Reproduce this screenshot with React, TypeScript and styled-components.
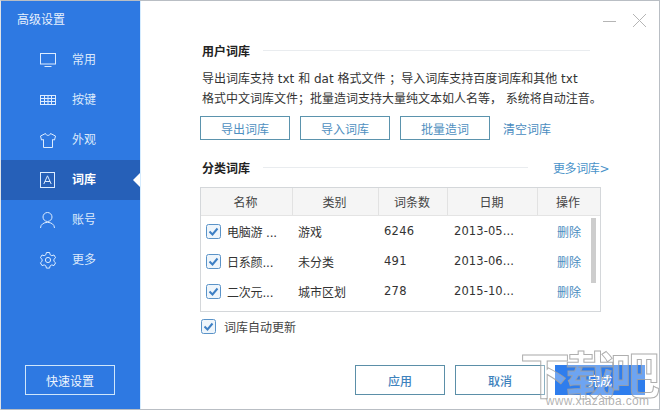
import React from "react";
import styled, { createGlobalStyle } from "styled-components";

const Global = createGlobalStyle`
  html, body { margin: 0; padding: 0; background: #fff; }
  body { font-family: "DejaVu Sans", "Noto Sans CJK SC", sans-serif; font-size: 12px; color: #333; }
  * { box-sizing: border-box; }
`;

const Frame = styled.div`
  position: relative;
  width: 660px; height: 410px; overflow: hidden;
  display: flex; background: #fff;
  border: 1px solid #b9bec4; border-left-color: #dfe3e8;
`;
const Side = styled.aside`
  width: 140px; background: #2e79e2; color: #e8f1fd;
  display: flex; flex-direction: column; flex: none;
  border-right: 1px solid #d5ecff;
`;
const SideTitle = styled.div`
  height: 39px; padding: 11px 0 0 16px; font-size: 12px; line-height: 16px; color: #e6f0fd;
`;
const Menu = styled.nav`display: flex; flex-direction: column;`;
const MenuItem = styled.div<{ $on?: boolean }>`
  position: relative; height: 40px; display: flex; align-items: center;
  padding-left: 38px; gap: 15px;
  font-size: 12px; font-weight: ${p => (p.$on ? 700 : 400)};
  background: ${p => (p.$on ? "#2660b8" : "transparent")};
  color: ${p => (p.$on ? "#fff" : "#dbe9fb")};
  &::after {
    content: ${p => (p.$on ? '""' : "none")};
    position: absolute; right: 0; top: 13px;
    border: 7px solid transparent; border-right-color: #fff; border-left-width: 0;
  }
`;
const MenuLabel = styled.span`padding-bottom: 3px;`;
const MenuIcon = styled.svg`width: 18px; height: 18px; flex: none; fill: none; stroke: #dcecff; stroke-width: 1; margin-bottom: 1px;`;
const Spacer = styled.div`flex: 1;`;
const QuickBtn = styled.div`
  margin: 0 0 14px 24px; width: 90px; height: 30px; border: 1px solid #cfe6fb;
  display: flex; align-items: center; justify-content: center; color: #eef5fe; font-size: 12px;
`;
const Main = styled.main`
  flex: 1; display: flex; flex-direction: column; padding: 0 13px 0 61px; position: relative; min-width: 0;
`;
const WinBar = styled.div`
  height: 39px; display: flex; justify-content: flex-end; align-items: flex-start; gap: 15px; padding: 12px 0 0 0; margin-right: -1px;
`;
const WinIcon = styled.svg`width: 15px; height: 15px; fill: none; stroke: #b5b5b5; stroke-width: 1;`;
const SectionHead = styled.div<{ $short?: boolean }>`
  display: flex; align-items: center; gap: 13px; height: 20px; font-size: 12px; font-weight: 700; color: #222;
  padding-right: ${p => (p.$short ? "0" : "56px")};
`;
const Rule = styled.span<{ $w?: number }>`
  flex: ${p => (p.$w ? "none" : 1)}; width: ${p => (p.$w ? `${p.$w}px` : "auto")}; height: 1px; background: #e9ecef;
`;
const MoreLink = styled.span`color: #4a93c9; font-size: 12px; font-weight: 400; margin-left: 12px; white-space: nowrap; letter-spacing: -0.4px;`;
const Para = styled.p`
  margin: 9px 0 7px; font-size: 12px; line-height: 20px; color: #333; white-space: nowrap;
`;
const BtnRow = styled.div`display: flex; align-items: center; gap: 10px; margin-left: -2px;`;
const OutlineBtn = styled.div`
  width: 90px; height: 24px; border: 1px solid #5b93ad; display: flex; align-items: center; justify-content: center;
  color: #4f8fc0; font-size: 12px; background: #fff;
`;
const ClearLink = styled.span`color: #4a8cc0; font-size: 12px; margin-left: 3px;`;
const Gap = styled.div`height: 17px;`;
const Table = styled.div`
  margin: 10px 0 0 -2px; width: 401px; height: 125px; border: 1px solid #d4d7da; position: relative; overflow: hidden;
`;
const Grid = `display: grid; grid-template-columns: 92px 86px 69px 90px 62px;`;
const HeadRow = styled.div`
  ${Grid} height: 28px; background: #f5f5f5; border-bottom: 1px solid #e4e4e4;
`;
const HeadCell = styled.div`
  display: flex; align-items: center; justify-content: center; font-size: 12px; color: #444;
  border-right: 1px solid #e2e2e2; padding-right: 2px;
  &:last-child { border-right: none; }
`;
const Row = styled.div`
  ${Grid} height: 30px; align-items: center; font-size: 12px; color: #333;
`;
const NameCell = styled.div`display: flex; align-items: center; gap: 6px; padding-left: 5px; white-space: nowrap; letter-spacing: -0.2px;`;
const Cell = styled.div`padding-left: 5px; white-space: nowrap;`;
const NumCell = styled(Cell)`letter-spacing: 0.3px; font-size: 11.5px;`;
const DateCell = styled(Cell)`padding-left: 6px; letter-spacing: 0.1px; font-size: 11.5px;`;
const DelCell = styled.div`color: #4a8cc0; text-align: center; padding-left: 1px; padding-right: 1px;`;
const Check = styled.svg`width: 15px; height: 15px; flex: none;`;
const Scrollbar = styled.div`
  position: absolute; right: 4px; top: 30px; width: 5px; height: 65px; background: #cdcdcd;
`;
const AutoRow = styled.label`display: flex; align-items: center; gap: 8px; margin: 7px 0 0 -1px; font-size: 12px; color: #444; height: 15px;`;
const Footer = styled.div`
  margin-top: auto; display: flex; gap: 10px; margin-left: 153px; margin-right: -26px; padding-bottom: 14px;
`;
const FootBtn = styled.div<{ $primary?: boolean }>`
  width: 90px; height: 30px; display: flex; align-items: center; justify-content: center; font-size: 12px; font-weight: 500;
  border: 1px solid ${p => (p.$primary ? "#2e7ded" : "#5b8fa8")};
  background: ${p => (p.$primary ? "#2e7ded" : "#fff")};
  color: ${p => (p.$primary ? "#fff" : "#3f83bd")};
`;
const Watermark = styled.div`
  position: absolute; right: 4px; bottom: 3px; width: 135px; text-align: center; pointer-events: none;
`;
const WmMain = styled.div`
  font-family: "Noto Sans CJK SC", sans-serif; font-size: 50px; line-height: 48px; font-weight: 700; letter-spacing: -5px;
  color: rgba(255,255,255,0.3); -webkit-text-stroke: 1px rgba(160,160,160,0.85); white-space: nowrap;
`;
const WmSub = styled.div`
  font-family: "Liberation Sans", sans-serif; font-size: 12px; line-height: 10px; color: rgba(170,170,170,0.9); letter-spacing: 0.3px; padding-left: 20px;
`;

const CheckIcon = () => (
  <Check viewBox="0 0 15 15">
    <rect x="0.5" y="0.5" width="14" height="14" rx="2" fill="#eef5fb" stroke="#5a93c8" />
    <path d="M3.5 7.5 L6.5 10.5 L11.5 4.5" fill="none" stroke="#3d7fc4" strokeWidth="2" />
  </Check>
);

const icons: Record<string, React.ReactNode> = {
  common: (<><rect x="1.5" y="2.5" width="15" height="10.5" /><path d="M5.5 15.5h7" /></>),
  keys: (<><rect x="1.5" y="4.5" width="15" height="9" /><path d="M1.5 7.5h15M1.5 10.5h15M5.5 4.5v9M9 4.5v9M12.5 4.5v9" /></>),
  skin: (<path d="M6.5 2.5 L1.5 5 L2.5 9 L4.5 8.5 V16.5 H13.5 V8.5 L15.5 9 L16.5 5 L11.5 2.5 C11 5 7 5 6.5 2.5Z" />),
  lib: (<><rect x="1.5" y="1.5" width="14" height="15" /><path d="M4.8 13 L8.5 4.8 L12.2 13 M6 10.5 H11" /></>),
  user: (<><circle cx="8.5" cy="6" r="4.5" /><path d="M1.5 17 C1.5 9.5 15.5 9.5 15.5 17" /></>),
  gear: (<><circle cx="9" cy="9" r="2.6" /><path d="M7.4 1.5h3.2l.5 2.2 1.7 1 2.2-.7 1.6 2.8-1.7 1.5v2l1.7 1.5-1.6 2.8-2.2-.7-1.7 1-.5 2.2H7.4l-.5-2.2-1.7-1-2.2.7-1.6-2.8 1.7-1.5v-2L1.4 6.8 3 4l2.2.7 1.7-1z" /></>),
};

const menu = [
  { k: "common", t: "常用" }, { k: "keys", t: "按键" }, { k: "skin", t: "外观" },
  { k: "lib", t: "词库", on: true }, { k: "user", t: "账号" }, { k: "gear", t: "更多" },
];

const rows = [
  { n: "电脑游 ...", c: "游戏", q: "6246", d: "2013-05..." },
  { n: "日系颜...", c: "未分类", q: "491", d: "2013-06..." },
  { n: "二次元...", c: "城市区划", q: "278", d: "2015-10..." },
];

export default function App() {
  return (
    <Frame>
      <Global />
      <Side>
        <SideTitle>高级设置</SideTitle>
        <Menu>
          {menu.map(m => (
            <MenuItem key={m.k} $on={m.on}>
              <MenuIcon viewBox="0 0 18 18">{icons[m.k]}</MenuIcon>
              <MenuLabel>{m.t}</MenuLabel>
            </MenuItem>
          ))}
        </Menu>
        <Spacer />
        <QuickBtn>快速设置</QuickBtn>
      </Side>
      <Main>
        <WinBar>
          <WinIcon viewBox="0 0 15 15"><path d="M1 8.5h13" /></WinIcon>
          <WinIcon viewBox="0 0 15 15"><path d="M1 1l13 13M14 1L1 14" /></WinIcon>
        </WinBar>
        <SectionHead>用户词库<Rule /></SectionHead>
        <Para>
          导出词库支持 txt 和 dat 格式文件 ；导入词库支持百度词库和其他 txt<br />
          格式中文词库文件；批量造词支持大量纯文本如人名等， 系统将自动注音。
        </Para>
        <BtnRow>
          <OutlineBtn>导出词库</OutlineBtn>
          <OutlineBtn>导入词库</OutlineBtn>
          <OutlineBtn>批量造词</OutlineBtn>
          <ClearLink>清空词库</ClearLink>
        </BtnRow>
        <Gap />
        <SectionHead $short>分类词库<Rule $w={265} /><MoreLink>更多词库&gt;</MoreLink></SectionHead>
        <Table>
          <HeadRow>
            {["名称", "类别", "词条数", "日期", "操作"].map(h => <HeadCell key={h}>{h}</HeadCell>)}
          </HeadRow>
          {rows.map(r => (
            <Row key={r.d}>
              <NameCell><CheckIcon />{r.n}</NameCell>
              <Cell>{r.c}</Cell>
              <NumCell>{r.q}</NumCell>
              <DateCell>{r.d}</DateCell>
              <DelCell>删除</DelCell>
            </Row>
          ))}
          <Scrollbar />
        </Table>
        <AutoRow><CheckIcon />词库自动更新</AutoRow>
        <Footer>
          <FootBtn>应用</FootBtn>
          <FootBtn>取消</FootBtn>
          <FootBtn $primary>完成</FootBtn>
        </Footer>
      </Main>
      <Watermark>
        <WmMain>下载吧</WmMain>
        <WmSub>www.xiazaiba.com</WmSub>
      </Watermark>
    </Frame>
  );
}
